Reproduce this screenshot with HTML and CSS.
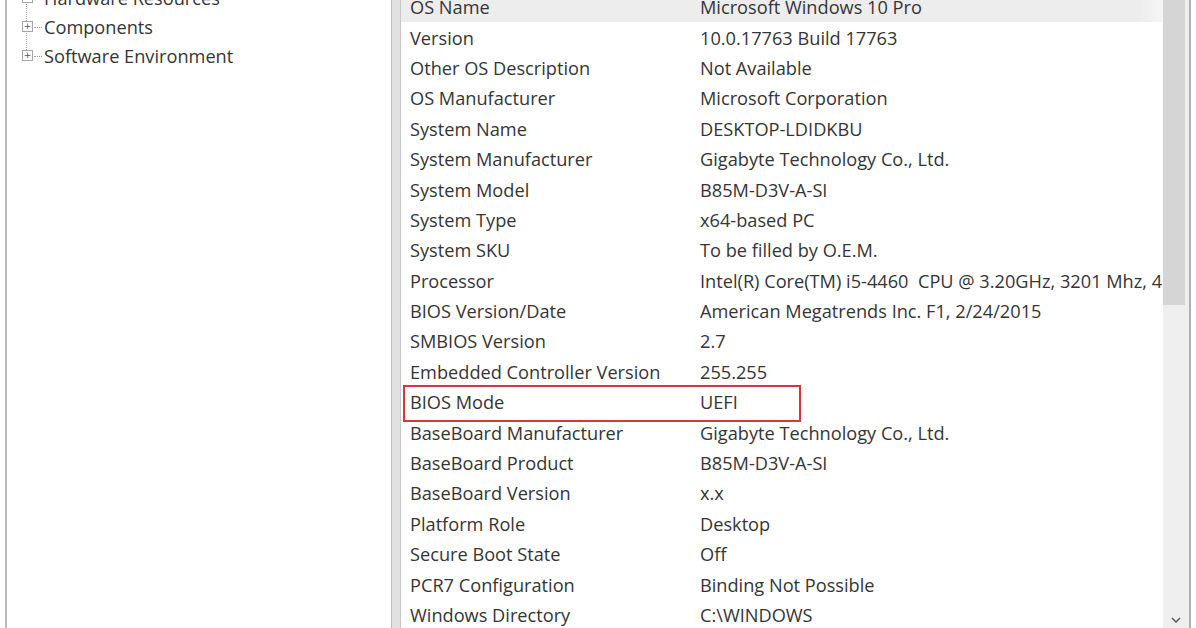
FILE: index.html
```html
<!DOCTYPE html>
<html lang="en">
<head>
<meta charset="utf-8">
<title>System Information</title>
<link rel="stylesheet" href="styles.css">
</head>
<body>
<div class="window">
  <aside class="tree">
    <ul class="tree-list">
      <li class="node"><span class="expander">+</span><span class="label">Hardware Resources</span></li>
      <li class="node"><span class="expander">+</span><span class="label">Components</span></li>
      <li class="node last"><span class="expander">+</span><span class="label">Software Environment</span></li>
    </ul>
  </aside>
  <div class="splitter"></div>
  <main class="details">
    <div class="rows">
      <div class="row selected"><span class="item">OS Name</span><span class="value">Microsoft Windows 10 Pro</span></div>
      <div class="row"><span class="item">Version</span><span class="value">10.0.17763 Build 17763</span></div>
      <div class="row"><span class="item">Other OS Description</span><span class="value">Not Available</span></div>
      <div class="row"><span class="item">OS Manufacturer</span><span class="value">Microsoft Corporation</span></div>
      <div class="row"><span class="item">System Name</span><span class="value">DESKTOP-LDIDKBU</span></div>
      <div class="row"><span class="item">System Manufacturer</span><span class="value">Gigabyte Technology Co., Ltd.</span></div>
      <div class="row"><span class="item">System Model</span><span class="value">B85M-D3V-A-SI</span></div>
      <div class="row"><span class="item">System Type</span><span class="value">x64-based PC</span></div>
      <div class="row"><span class="item">System SKU</span><span class="value">To be filled by O.E.M.</span></div>
      <div class="row"><span class="item">Processor</span><span class="value">Intel(R) Core(TM) i5-4460  CPU @ 3.20GHz, 3201 Mhz, 4 Core(s), 4 Logical Processor(s)</span></div>
      <div class="row"><span class="item">BIOS Version/Date</span><span class="value">American Megatrends Inc. F1, 2/24/2015</span></div>
      <div class="row"><span class="item">SMBIOS Version</span><span class="value">2.7</span></div>
      <div class="row"><span class="item">Embedded Controller Version</span><span class="value">255.255</span></div>
      <div class="row marked"><span class="item">BIOS Mode</span><span class="value">UEFI</span></div>
      <div class="row"><span class="item">BaseBoard Manufacturer</span><span class="value">Gigabyte Technology Co., Ltd.</span></div>
      <div class="row"><span class="item">BaseBoard Product</span><span class="value">B85M-D3V-A-SI</span></div>
      <div class="row"><span class="item">BaseBoard Version</span><span class="value">x.x</span></div>
      <div class="row"><span class="item">Platform Role</span><span class="value">Desktop</span></div>
      <div class="row"><span class="item">Secure Boot State</span><span class="value">Off</span></div>
      <div class="row"><span class="item">PCR7 Configuration</span><span class="value">Binding Not Possible</span></div>
      <div class="row"><span class="item">Windows Directory</span><span class="value">C:\WINDOWS</span></div>
      <div class="row"><span class="item">System Directory</span><span class="value">C:\WINDOWS\system32</span></div>
    </div>
  </main>
  <div class="scrollbar">
    <div class="thumb"></div>
    <div class="track"></div>
    <svg class="arrow" width="10" height="6" viewBox="0 0 10 6"><path d="M1 1 L5 5 L9 1" fill="none" stroke="#606060" stroke-width="1.6"/></svg>
  </div>
  <div class="frame-right"></div>
</div>
</body>
</html>
```

FILE: styles.css
```css
html, body {
  margin: 0;
  padding: 0;
  background: #ffffff;
  overflow: hidden;
}

body {
  font-family: "Open Sans", "Noto Sans", sans-serif;
  font-size: 18.2px;
  color: #353535;
}

.window {
  display: flex;
  height: 628px;
  padding-left: 5px;
  box-sizing: border-box;
}

/* left navigation tree */
.tree {
  width: 386px;
  border-left: 2px solid #b9b9b9;
  box-sizing: border-box;
  overflow: hidden;
}

.tree-list {
  list-style: none;
  margin: -17px 0 0 0;
  padding: 0 0 0 15px;
}

.node {
  position: relative;
  display: flex;
  align-items: center;
  height: 29px;
}

/* dotted connector between expanders */
.node::before {
  content: "";
  position: absolute;
  left: 4px;
  top: -14px;
  height: 29px;
  border-left: 1px dotted #a0a0a0;
}

.node:first-child::before {
  display: none;
}

.expander {
  width: 9px;
  height: 9px;
  border: 1px solid #a6a6a6;
  background: #ffffff;
  font-size: 9px;
  line-height: 8px;
  text-align: center;
  color: #555555;
  position: relative;
  z-index: 1;
  font-family: "DejaVu Sans", sans-serif;
}

.label {
  margin-left: 11px;
  position: relative;
}

.label::before {
  content: "";
  position: absolute;
  left: -10px;
  top: 50%;
  width: 8px;
  border-top: 1px dotted #a0a0a0;
}

/* splitter between panes */
.splitter {
  width: 10px;
  background: #e1e1e1;
  border-left: 1px solid #bcbcbc;
  border-right: 1px solid #c8c8c8;
  box-sizing: border-box;
}

/* item / value list */
.details {
  width: 762px;
  overflow: hidden;
}

.rows {
  margin-top: -8px;
}

.row {
  display: flex;
  align-items: center;
  height: 30.4px;
  box-sizing: border-box;
  white-space: pre;
}

.row.selected {
  background: linear-gradient(to right, #ededed 0, #ededed 97%, #f6f6f6 100%);
}

.row.marked {
  position: relative;
}

.row.marked::after {
  content: "";
  position: absolute;
  left: 2px;
  top: -2px;
  width: 398px;
  height: 37px;
  border: 2px solid #d8363c;
  box-sizing: border-box;
}

.item {
  width: 290px;
  padding-left: 9px;
  flex: none;
}

.value {
  flex: 1;
  overflow: hidden;
}

/* vertical scrollbar */
.scrollbar {
  width: 26px;
  display: flex;
  flex-direction: column;
  position: relative;
  background: #efefef;
}

.thumb {
  height: 305px;
  width: 22px;
  background: #d5d5d5;
}

.track {
  flex: 1;
}

.arrow {
  position: absolute;
  left: 8px;
  bottom: 5px;
}

.frame-right {
  width: 7px;
  border-left: 2px solid #b0b0b0;
  box-sizing: border-box;
  background: #ffffff;
}
```
